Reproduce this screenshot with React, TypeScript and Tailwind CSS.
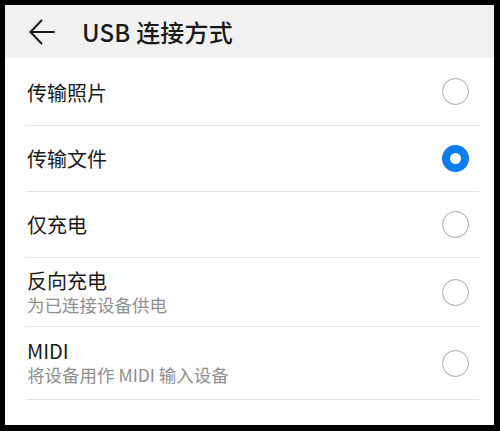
const options = [
  { title: '传输照片', h: 'h-[68px]', pad: 'pt-[3px]' },
  { title: '传输文件', h: 'h-[66px]', pad: 'pt-[0px]', selected: true },
  { title: '仅充电', h: 'h-[66px]', pad: 'pt-[0px]' },
  { title: '反向充电', sub: '为已连接设备供电', h: 'h-[69px]', pad: 'pt-[1px]' },
  { title: 'MIDI', sub: '将设备用作 MIDI 输入设备', h: 'h-[73px]', pad: 'pt-[0px]' },
];

function Radio({ checked }: { checked?: boolean }) {
  if (checked) {
    return <div className="w-[27px] h-[27px] rounded-full border-[8px] border-[#0a7cf2] bg-white" />;
  }
  return <div className="w-[27px] h-[27px] rounded-full border-[1.5px] border-[#a3a3a3] bg-white" />;
}

export default function App() {
  return (
    <div
      className="w-[500px] h-[431px] bg-black pt-[5px] pl-[5px] pr-[6px] pb-[6px]"
      style={{ fontFamily: '"Noto Sans CJK SC", "Noto Sans", sans-serif' }}
    >
      <div className="w-full h-full bg-white flex flex-col">
        {/* header */}
        <div className="h-[53px] bg-[#f1f1f1] flex items-center shrink-0">
          <svg
            width="26"
            height="26"
            viewBox="0 0 26 26"
            className="ml-[24px]"
            fill="none"
            stroke="#1a1a1a"
            strokeWidth="2"
            strokeLinecap="round"
            strokeLinejoin="round"
          >
            <path d="M25 13H1.5" />
            <path d="M12.5 1.5L1.5 13l11 11.5" />
          </svg>
          <span className="ml-[27px] text-[24px] leading-none text-[#1a1a1a] font-medium tracking-[0.2px]">
            USB 连接方式
          </span>
        </div>

        <div className="flex flex-col ml-[21px] mr-[15px]">
          {options.map((o, i) => (
            <div
              key={i}
              className={`${o.h} flex items-center justify-between border-b border-[#e3e3e3]`}
            >
              <div className={`pl-[1px] ${o.pad} flex flex-col`}>
                <span className="text-[20px] leading-[24px] text-[#1a1a1a]">{o.title}</span>
                {o.sub && (
                  <span className="text-[17.5px] leading-[24px] text-[#8e8e8e]">{o.sub}</span>
                )}
              </div>
              <div className="pr-[10px]">
                <Radio checked={o.selected} />
              </div>
            </div>
          ))}
        </div>
      </div>
    </div>
  );
}
